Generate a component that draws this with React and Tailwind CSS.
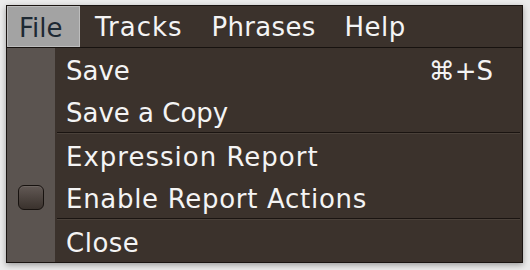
import React from 'react';

const menus = [
  { label: 'Tracks', cls: 'tracking-[1px]' },
  { label: 'Phrases', cls: 'tracking-[0.3px]' },
  { label: 'Help', cls: 'tracking-[0.5px]' },
];

function Row({ label, shortcut, checkbox, spacing = '' }) {
  return (
    <div className="flex h-[42px]">
      <div className="flex w-[48px] shrink-0 items-center justify-center bg-[#5b5450]">
        {checkbox ? (
          <div className="h-[25px] w-[26px] rounded-[6px] border border-[#17120f] bg-gradient-to-b from-[#625955] to-[#3a322d] shadow-[inset_0_1px_0_rgba(255,255,255,0.08)]" />
        ) : null}
      </div>
      <div className="flex flex-1 justify-between pl-[11px] pr-[29px] leading-[46px]">
        <span className={spacing}>{label}</span>
        {shortcut ? <span>{shortcut}</span> : null}
      </div>
    </div>
  );
}

function Separator() {
  return (
    <div className="flex h-[2px]">
      <div className="w-[48px] shrink-0 bg-[#5b5450]" />
      <div className="flex-1 px-[2px]">
        <div className="h-px bg-[#1a1411]" />
        <div className="h-px bg-[#4a413a]" />
      </div>
    </div>
  );
}

export default function App() {
  return (
    <div className="h-[270px] w-[530px] bg-[#ececec] pl-[6px] pt-[5px]" style={{ fontFamily: '"DejaVu Sans", Verdana, sans-serif' }}>
      <div className="w-[517px] border border-[#1a1411] bg-[#3b322c] text-[26px] text-[#f4f4f4] shadow-[0_2px_6px_rgba(0,0,0,0.35)]">
        <div className="flex h-[42px] items-stretch border-b border-[#17120f] leading-[42px]">
          <div className="w-[73px] border border-[#bdbdbd] bg-[#a3a3a3] pl-[11px] text-[#1e2933]">File</div>
          <div className="flex gap-[29px] pl-[15px]">
            {menus.map(m => (
              <span key={m.label} className={m.cls}>{m.label}</span>
            ))}
          </div>
        </div>
        <Row label="Save" shortcut="⌘+S" />
        <Row label="Save a Copy" />
        <Separator />
        <Row label="Expression Report" spacing="tracking-[1px]" />
        <Row label="Enable Report Actions" spacing="tracking-[0.7px]" checkbox />
        <Separator />
        <Row label="Close" spacing="tracking-[0.5px]" />
      </div>
    </div>
  );
}
